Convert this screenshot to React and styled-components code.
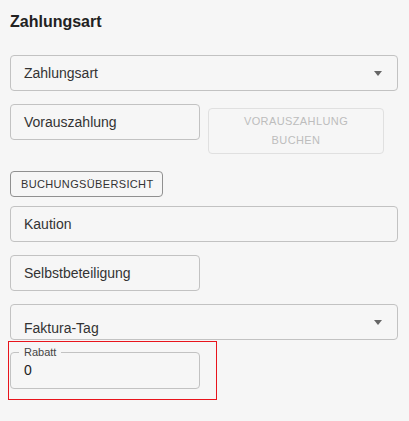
import React from "react";
import styled, { createGlobalStyle } from "styled-components";

const GlobalStyle = createGlobalStyle`
  html, body {
    margin: 0;
    background: #f6f6f6;
  }
  body {
    font-family: "Liberation Sans", Arial, sans-serif;
  }
`;

function App() {
  return (
    <>
      <GlobalStyle />
      <Panel>
        <Title>Zahlungsart</Title>
        <Select $top={23}>
          <FieldText>Zahlungsart</FieldText>
          <Arrow />
        </Select>
        <Row>
          <Field $width="190px">
            <FieldText>Vorauszahlung</FieldText>
          </Field>
          <DisabledButton disabled>Vorauszahlung buchen</DisabledButton>
        </Row>
        <OutlineButton>Buchungsübersicht</OutlineButton>
        <Field $top={9}>
          <FieldText>Kaution</FieldText>
        </Field>
        <Field $top={13} $width="190px">
          <FieldText>Selbstbeteiligung</FieldText>
        </Field>
        <Select $top={13}>
          <FieldText $shift={13}>Faktura-Tag</FieldText>
          <Arrow />
        </Select>
        <Highlight>
          <Notched>
            <Legend>Rabatt</Legend>
            <Value>0</Value>
          </Notched>
        </Highlight>
      </Panel>
    </>
  );
}

export default App;

const Panel = styled.div`
  display: flex;
  flex-direction: column;
  align-items: flex-start;
  padding: 12px 11px 20px 10px;
`;

const Title = styled.h2`
  margin: 0;
  font-size: 16px;
  line-height: 20px;
  font-weight: 700;
  color: #222;
`;

const Field = styled.div`
  box-sizing: border-box;
  display: flex;
  align-items: flex-start;
  width: ${(p) => p.$width || "100%"};
  height: 36px;
  margin-top: ${(p) => p.$top || 0}px;
  padding: 0 13px;
  border: 1px solid #c2c2c2;
  border-radius: 4px;
`;

const Select = styled(Field)`
  align-items: stretch;
  padding-right: 15px;
`;

const FieldText = styled.span`
  flex: 1;
  align-self: ${(p) => (p.$shift ? "flex-start" : "center")};
  padding-top: ${(p) => p.$shift || 0}px;
  font-size: 14px;
  line-height: 20px;
  color: #333;
`;

const Arrow = styled.span`
  align-self: center;
  width: 0;
  height: 0;
  border-left: 4px solid transparent;
  border-right: 4px solid transparent;
  border-top: 5px solid #666;
`;

const Row = styled.div`
  display: flex;
  align-items: flex-start;
  gap: 8px;
  margin-top: 13px;
`;

const DisabledButton = styled.button`
  box-sizing: border-box;
  width: 176px;
  height: 46px;
  margin-top: 4px;
  padding: 3px 30px;
  background: transparent;
  border: 1px solid #e0e0e0;
  border-radius: 4px;
  font-family: "Liberation Sans", Arial, sans-serif;
  font-size: 11px;
  line-height: 19px;
  letter-spacing: 0.4px;
  text-transform: uppercase;
  color: #bdbdbd;
`;

const OutlineButton = styled.button`
  box-sizing: border-box;
  height: 26px;
  margin-top: 17px;
  padding: 0 9px 0 10px;
  background: transparent;
  border: 1px solid #909090;
  border-radius: 4px;
  font-family: "Liberation Sans", Arial, sans-serif;
  font-size: 11px;
  letter-spacing: 0.35px;
  text-transform: uppercase;
  color: #333;
`;

const Highlight = styled.div`
  box-sizing: border-box;
  width: 209px;
  margin: 1px 0 0 -2px;
  padding: 4px 0 10px 1px;
  border: 1px solid #e8141c;
`;

const Notched = styled.fieldset`
  box-sizing: border-box;
  width: 190px;
  margin: 0;
  padding: 0 13px 8px;
  border: 1px solid #c2c2c2;
  border-radius: 4px;
`;

const Legend = styled.legend`
  margin-left: -5px;
  padding: 0 5px;
  font-size: 11px;
  line-height: 12px;
  color: #444;
`;

const Value = styled.div`
  margin-top: 2px;
  font-size: 14px;
  line-height: 20px;
  color: #222;
`;
